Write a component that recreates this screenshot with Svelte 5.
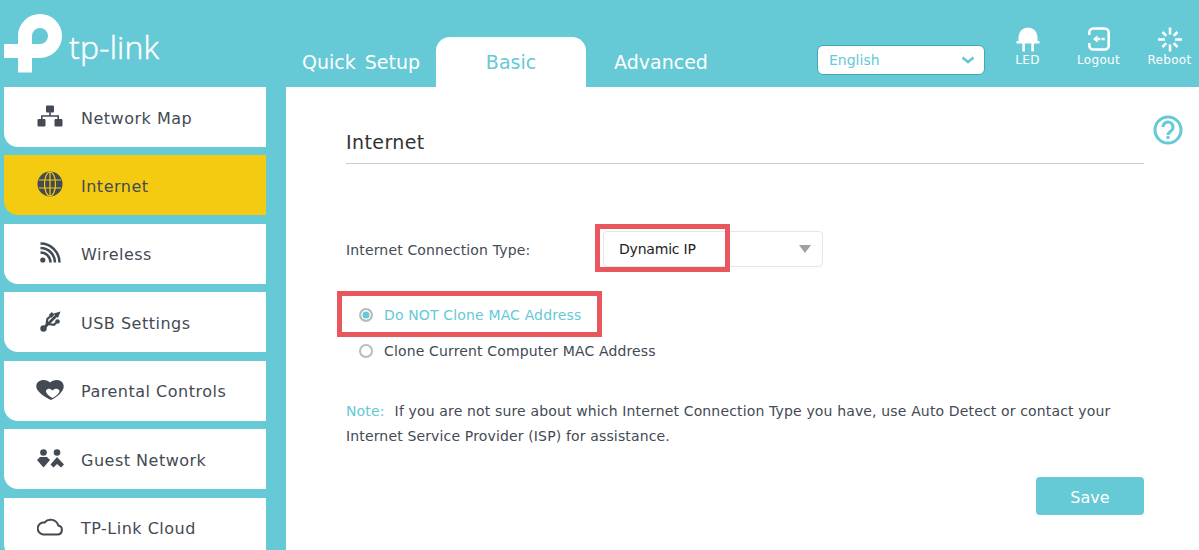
<script>
  const tabs = ["Quick Setup", "Basic", "Advanced"];
  const activeTab = "Basic";

  const menu = [
    { label: "Network Map", icon: "map" },
    { label: "Internet", icon: "globe", active: true },
    { label: "Wireless", icon: "wifi" },
    { label: "USB Settings", icon: "usb" },
    { label: "Parental Controls", icon: "heart" },
    { label: "Guest Network", icon: "guest" },
    { label: "TP-Link Cloud", icon: "cloud" },
  ];
</script>

<div class="page">
  <header>
    <div class="logo">
      <svg width="62" height="74" viewBox="0 0 62 74">
        <path d="M25 72.500V36a15 15 0 0 1 15-15a15 15 0 0 1 15 15a15 15 0 0 1-15 15H4" fill="none" stroke="#fff" stroke-width="14" />
      </svg>
      <span>tp-link</span>
    </div>

    <nav class="tabs">
      {#each tabs as tab}
        <div class="tab" class:current={tab === activeTab}>{tab}</div>
      {/each}
    </nav>

    <div class="lang">
      <span>English</span>
      <svg width="14" height="8" viewBox="0 0 14 8"><path d="M1.500 1.500L7 6l5.500-4.500" fill="none" stroke="#65c9d6" stroke-width="2.600" /></svg>
    </div>

    <div class="tools">
      <div class="tool">
        <svg width="24" height="25" viewBox="0 0 24 25">
          <path d="M2.500 14V10a9.500 9.500 0 0 1 19 0v4h2v2.500H.5V14z" fill="#fff" />
          <path d="M6.300 16h2.600v8.500H6.300zM15.300 16h2.600v8.500h-2.600z" fill="#fff" />
        </svg>
        <span>LED</span>
      </div>
      <div class="tool">
        <svg width="24" height="25" viewBox="0 0 24 25">
          <path d="M2.300 8V5.500a4 4 0 0 1 4-4h11.400a4 4 0 0 1 4 4v13a4 4 0 0 1-4 4H6.300a4 4 0 0 1-4-4V16" fill="none" stroke="#fff" stroke-width="2.600" />
          <path d="M6 12l4.500-3.800v7.600z" fill="#fff" />
          <path d="M10.500 10.800h2.800v2.400h-2.800zM14.500 10.800h3.200v2.400h-3.200z" fill="#fff" />
        </svg>
        <span>Logout</span>
      </div>
      <div class="tool">
        <svg width="26" height="25" viewBox="0 0 26 25">
          <g stroke="#fff" stroke-width="2.600">
            <path d="M13 .5v7M13 17.500v7M1 12.500h7M18 12.500h7M5.500 5l3.800 3.800M16.700 16.200l3.800 3.800M20.500 5l-3.800 3.800M9.300 16.200L5.500 20" />
          </g>
        </svg>
        <span>Reboot</span>
      </div>
    </div>
  </header>

  <div class="body">
    <aside>
      {#each menu as item}
        <div class="item" class:active={item.active}>
          <span class="icon">
            {#if item.icon === "map"}
              <svg width="26" height="22" viewBox="0 0 26 22" fill="#434a54">
                <rect x="9" y="0.500" width="8" height="7" rx="1" />
                <rect x="0.500" y="14" width="8" height="7.500" rx="1" />
                <rect x="17.500" y="14" width="8" height="7.500" rx="1" />
                <path d="M12.200 7h1.600v3.200H22V14h-1.600v-2.200H5.600V14H4v-3.800h8.200z" />
              </svg>
            {:else if item.icon === "globe"}
              <svg width="26" height="26" viewBox="0 0 26 26">
                <circle cx="13" cy="13" r="12.500" fill="#434a54" />
                <g fill="none" stroke="#f5cb12" stroke-width="1.200">
                  <ellipse cx="13" cy="13" rx="5.500" ry="12" />
                  <path d="M13 1v24M2 9h22M2 17h22" />
                </g>
              </svg>
            {:else if item.icon === "wifi"}
              <svg width="21" height="21" viewBox="0 0 21 21" fill="none" stroke="#434a54" stroke-width="2.500">
                <circle cx="2.800" cy="18" r="2.600" fill="#434a54" stroke="none" />
                <path d="M.5 10.500A10 10 0 0 1 10.500 20.500M.5 6A14.500 14.500 0 0 1 15 20.500M.5 1.500A19 19 0 0 1 19.500 20.500" />
              </svg>
            {:else if item.icon === "usb"}
              <svg width="21" height="21" viewBox="0 0 21 21" fill="#434a54">
                <circle cx="3.500" cy="17.500" r="3.200" />
                <path d="M3.500 17.500L17 4" stroke="#434a54" stroke-width="2.600" />
                <path d="M20.500 .5L13.500 2.500l4.500 4.500z" />
                <path d="M6.500 14.500l.8-6.500 3.500-3" fill="none" stroke="#434a54" stroke-width="2.200" />
                <path d="M8.800 4l3-3 2.700 2.700-3 3z" />
                <path d="M8 13l6 .8 2-2" fill="none" stroke="#434a54" stroke-width="2.200" />
                <circle cx="17.500" cy="10.500" r="2.300" />
              </svg>
            {:else if item.icon === "heart"}
              <svg width="28" height="20" viewBox="0 0 28 20">
                <path d="M15 20C10 18 .8 12 .3 7 0 2 4 0 7.500 0 10.500 0 12.500 1 14 2.500 15.500 1 18 0 21 0c4 0 7 3 6.700 7C27.300 12 20 18 15 20z" fill="#434a54" />
                <path d="M16.500 18C13 16 10 13.500 10 11 10 8.500 14 7.500 16.500 10.500 19 7.500 23.500 8.500 23.500 11 23.500 13.500 20 16 16.500 18z" fill="#fff" />
              </svg>
            {:else if item.icon === "guest"}
              <svg width="27" height="19" viewBox="0 0 27 19" fill="#434a54">
                <circle cx="6.500" cy="3.500" r="3.300" />
                <circle cx="20" cy="3.500" r="3.300" />
                <path d="M0 11l3-3h7l3 3-6.500 7.500z" />
                <path d="M13.500 15.500L20 8l7 7.500-3 3-4-3.500-3.500 3.500z" />
              </svg>
            {:else}
              <svg width="26" height="19" viewBox="0 0 26 19">
                <path d="M6 17.500H20.500a4.500 4.500 0 0 0 .8-8.900A8 8 0 0 0 7.500 5.500 6 6 0 0 0 6 17.500z" fill="none" stroke="#434a54" stroke-width="2" />
              </svg>
            {/if}
          </span>
          <span class="label">{item.label}</span>
        </div>
      {/each}
    </aside>

    <main>
      <div class="help">
        <svg width="30" height="30" viewBox="0 0 30 30">
          <circle cx="15" cy="15" r="13" fill="none" stroke="#65c9d6" stroke-width="3" />
          <path d="M10 12a5 5 0 1 1 8 4c-2 1.500-3 2-3 4" fill="none" stroke="#65c9d6" stroke-width="3" />
          <rect x="13.500" y="21" width="3" height="3" fill="#65c9d6" />
        </svg>
      </div>

      <h1>Internet</h1>

      <div class="row">
        <label for="conn">Internet Connection Type:</label>
        <div class="select" id="conn">
          <span>Dynamic IP</span>
          <i class="caret"></i>
        </div>
        <div class="mark mark-select"></div>
      </div>

      <div class="radios">
        <div class="radio checked"><i></i><span>Do NOT Clone MAC Address</span></div>
        <div class="radio"><i></i><span>Clone Current Computer MAC Address</span></div>
        <div class="mark mark-radio"></div>
      </div>

      <p class="note"><b>Note:</b>If you are not sure about which Internet Connection Type you have, use Auto Detect or contact your Internet Service Provider (ISP) for assistance.</p>

      <div class="actions">
        <button>Save</button>
      </div>
    </main>
  </div>
</div>

<style>
  :global(body) {
    margin: 0;
    overflow: hidden;
  }

  .page {
    height: 550px;
    overflow: hidden;
    background: #65c9d6;
    font-family: "DejaVu Sans", Verdana, sans-serif;
    color: #434a54;
  }

  header {
    display: flex;
    height: 87px;
    color: #fff;
  }

  .logo {
    width: 286px;
    flex: none;
    display: flex;
    align-items: flex-start;
  }

  .logo span {
    margin: 27px 0 0 7px;
    font-family: "Open Sans", sans-serif;
    font-size: 32px;
    font-weight: 300;
    line-height: 40px;
    letter-spacing: 0.2px;
    -webkit-text-stroke: 0.5px #fff;
  }

  .tabs {
    display: flex;
    align-items: flex-end;
    height: 87px;
    width: 464px;
    flex: none;
  }

  .tab {
    width: 150px;
    height: 50px;
    line-height: 50px;
    text-align: center;
    font-size: 19px;
    word-spacing: 3px;
    border-radius: 14px 14px 0 0;
  }

  .tab.current {
    background: #fff;
    color: #65c9d6;
  }

  .lang {
    box-sizing: border-box;
    width: 168px;
    height: 30px;
    margin: 45px 0 0 67px;
    flex: none;
    display: flex;
    align-items: center;
    justify-content: space-between;
    padding: 0 9px 0 11px;
    background: #fff;
    border: 1px solid #3fa9b5;
    border-radius: 6px;
    color: #65c9d6;
    font-size: 14px;
  }

  .tools {
    display: flex;
    margin-left: 7px;
  }

  .tool {
    display: flex;
    flex-direction: column;
    align-items: center;
    width: 71px;
    padding-top: 27px;
    font-size: 12px;
    line-height: 14px;
    letter-spacing: 0.3px;
  }

  .tool svg {
    margin-bottom: 1px;
  }

  .body {
    display: flex;
  }

  aside {
    box-sizing: border-box;
    width: 286px;
    flex: none;
    padding: 0 20px 0 4px;
    display: flex;
    flex-direction: column;
    gap: 8.45px;
  }

  .item {
    flex: none;
    height: 60px;
    display: flex;
    align-items: center;
    background: #fff;
    border-radius: 0 0 0 14px;
    font-size: 16px;
  }

  .item.active {
    background: #f5cb12;
  }

  .icon {
    width: 77px;
    flex: none;
    display: flex;
    justify-content: center;
    padding-left: 15px;
    box-sizing: border-box;
    margin-top: -2px;
  }

  .label {
    padding-top: 2px;
    letter-spacing: 0.5px;
  }

  main {
    position: relative;
    flex: 1;
    height: 463px;
    box-sizing: border-box;
    padding: 0 55px 0 60px;
    background: #fff;
  }

  .help {
    position: absolute;
    top: 28px;
    right: 16px;
    line-height: 0;
  }

  h1 {
    margin: 0;
    padding-top: 43px;
    height: 33px;
    line-height: 25px;
    font-size: 19px;
    font-weight: 400;
    letter-spacing: 0.4px;
    color: #333;
    border-bottom: 1px solid #ccc;
  }

  .row {
    position: relative;
    display: flex;
    align-items: center;
    margin-top: 67px;
    height: 37px;
    font-size: 14px;
    letter-spacing: 0.15px;
  }

  label {
    width: 257px;
    flex: none;
  }

  .select {
    box-sizing: border-box;
    align-self: flex-start;
    width: 220px;
    height: 36px;
    display: flex;
    align-items: center;
    justify-content: space-between;
    padding: 0 11px 0 15px;
    border: 1px solid #e6e6e6;
    border-radius: 4px;
    color: #222;
    letter-spacing: -0.2px;
  }

  .caret {
    border-left: 6px solid transparent;
    border-right: 6px solid transparent;
    border-top: 8px solid #a0a0a0;
  }

  .mark {
    position: absolute;
    box-sizing: border-box;
    border: 5px solid #e8565e;
  }

  .mark-select {
    left: 249px;
    top: -7px;
    width: 135px;
    height: 48px;
  }

  .mark-radio {
    left: -9px;
    top: -6px;
    width: 265px;
    height: 46px;
  }

  .radios {
    position: relative;
    margin-top: 29px;
    font-size: 14px;
    letter-spacing: 0.15px;
  }

  .radio {
    display: flex;
    align-items: center;
    height: 36px;
    padding-left: 13px;
    gap: 11px;
  }

  .radio i {
    box-sizing: border-box;
    width: 14px;
    height: 14px;
    border: 2px solid #bbb;
    border-radius: 50%;
    background: #fff;
  }

  .radio.checked {
    color: #65c9d6;
  }

  .radio.checked i {
    background: #65c9d6;
    box-shadow: inset 0 0 0 1.5px #fff;
  }

  .note {
    margin: 30px 0 0;
    font-size: 14px;
    line-height: 25px;
    letter-spacing: 0.15px;
  }

  .note b {
    margin-right: 10px;
    font-weight: 400;
    color: #65c9d6;
  }

  .actions {
    display: flex;
    justify-content: flex-end;
    margin-top: 28px;
  }

  button {
    width: 108px;
    height: 38px;
    padding: 2px 0 0;
    border: 0;
    border-radius: 4px;
    background: #65c9d6;
    color: #fff;
    font-family: inherit;
    font-size: 16px;
  }
</style>
